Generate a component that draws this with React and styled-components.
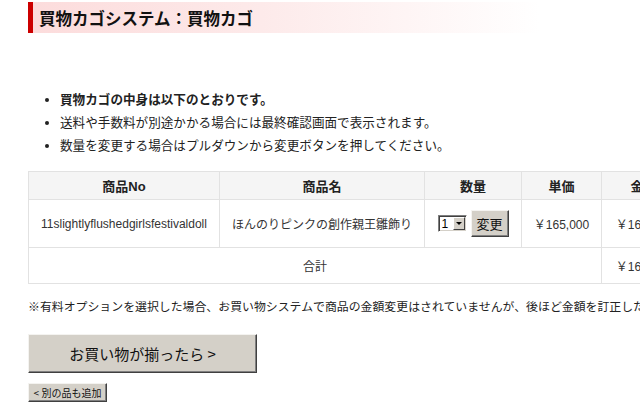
import React from "react";
import styled, { createGlobalStyle } from "styled-components";

const Global = createGlobalStyle`
  html, body { margin: 0; padding: 0; background: #fff; overflow: hidden; }
  body { font-family: "Liberation Sans", "Noto Sans CJK JP", sans-serif; color: #222; }
`;

const Page = styled.div`
  padding: 2px 0 0 28px;
  width: 640px;
  box-sizing: border-box;
`;

const Heading = styled.h1`
  margin: 0;
  height: 31px;
  width: 512px;
  box-sizing: border-box;
  border-left: 5px solid #cc0000;
  background: linear-gradient(to right, #fcdcdc 0%, #fdeaea 45%, #ffffff 100%);
  display: flex;
  align-items: center;
  padding-left: 6px;
  font-size: 16.5px;
  font-weight: bold;
  color: #111;
  font-family: "Noto Sans CJK JP", sans-serif;
`;

const Notes = styled.ul`
  margin: 54px 0 0 0;
  padding: 0 0 0 32px;
  list-style: disc;
  font-size: 12.6px;
  line-height: 23px;
  font-family: "Noto Sans CJK JP", sans-serif;
  li::marker { font-size: 11px; }
`;

const Note = styled.li`
  font-weight: ${(p) => (p.$strong ? "bold" : "normal")};
  color: #222;
`;

const Table = styled.table`
  margin-top: 15px;
  border-collapse: collapse;
  table-layout: fixed;
  width: 657px;
  font-size: 12px;
`;

const Th = styled.th`
  background: #f5f5f5;
  border: 1px solid #e2e2e2;
  height: 27px;
  padding: 0;
  font-size: 13px;
  font-weight: bold;
  color: #222;
  text-align: center;
  font-family: "Liberation Sans", "Noto Sans CJK JP", sans-serif;
`;

const Td = styled.td`
  border: 1px solid #e2e2e2;
  height: ${(p) => p.$h}px;
  padding: 0;
  text-align: center;
  vertical-align: middle;
  color: #333;
  white-space: nowrap;
  overflow: hidden;
`;

const QtyWrap = styled.div`
  display: flex;
  align-items: center;
  justify-content: center;
  gap: 4px;
`;

const FakeSelect = styled.span`
  display: inline-flex;
  align-items: stretch;
  height: 17px;
  width: 29px;
  box-sizing: border-box;
  border-top: 1px solid #808080;
  border-left: 1px solid #808080;
  border-right: 1px solid #fff;
  border-bottom: 1px solid #fff;
  box-shadow: inset 1px 1px 0 #404040, inset -1px -1px 0 #d4d0c8;
  background: #fff;
  font-size: 12px;
  color: #000;
`;

const SelectValue = styled.span`
  flex: 1;
  display: flex;
  align-items: center;
  padding-left: 3px;
  font-family: "Liberation Sans", sans-serif;
`;

const SelectArrow = styled.span`
  width: 12px;
  margin: 1px 1px 1px 0;
  background: #d4d0c8;
  border-top: 1px solid #fff;
  border-left: 1px solid #fff;
  border-right: 1px solid #404040;
  border-bottom: 1px solid #404040;
  box-sizing: border-box;
  display: flex;
  align-items: center;
  justify-content: center;
  &::after {
    content: "";
    border-left: 3px solid transparent;
    border-right: 3px solid transparent;
    border-top: 3px solid #000;
  }
`;

const ClassicButton = styled.button`
  background: #d4d0c8;
  border: none;
  border-top: 1px solid #f4f3f0;
  border-left: 1px solid #f4f3f0;
  border-right: 1px solid #404040;
  border-bottom: 1px solid #404040;
  box-shadow: inset -1px -1px 0 #808080;
  color: #111;
  font-family: "Noto Sans CJK JP", sans-serif;
  padding: 0;
  cursor: pointer;
  width: ${(p) => p.$w}px;
  height: ${(p) => p.$h}px;
  font-size: ${(p) => p.$fs}px;
  display: flex;
  align-items: center;
  justify-content: center;
  white-space: pre;
`;

const Remark = styled.p`
  margin: 13px 0 0 0;
  font-size: 11.9px;
  line-height: 18px;
  white-space: nowrap;
  font-family: "Noto Sans CJK JP", sans-serif;
  color: #222;
`;

const Actions = styled.div`
  display: flex;
  flex-direction: column;
  align-items: flex-start;
  gap: 10px;
  margin-top: 19px;
`;

export default function App() {
  return (
    <>
      <Global />
      <Page>
        <Heading>買物カゴシステム：買物カゴ</Heading>
        <Notes>
          <Note $strong>買物カゴの中身は以下のとおりです。</Note>
          <Note>送料や手数料が別途かかる場合には最終確認画面で表示されます。</Note>
          <Note>数量を変更する場合はプルダウンから変更ボタンを押してください。</Note>
        </Notes>
        <Table>
          <colgroup>
            <col style={{ width: 191 }} />
            <col style={{ width: 205 }} />
            <col style={{ width: 97 }} />
            <col style={{ width: 80 }} />
            <col style={{ width: 84 }} />
          </colgroup>
          <thead>
            <tr>
              <Th>商品No</Th>
              <Th>商品名</Th>
              <Th>数量</Th>
              <Th>単価</Th>
              <Th>金額</Th>
            </tr>
          </thead>
          <tbody>
            <tr>
              <Td $h={47}>11slightlyflushedgirlsfestivaldoll</Td>
              <Td $h={47}>ほんのりピンクの創作親王雛飾り</Td>
              <Td $h={47}>
                <QtyWrap>
                  <FakeSelect>
                    <SelectValue>1</SelectValue>
                    <SelectArrow />
                  </FakeSelect>
                  <ClassicButton $w={38} $h={27} $fs={13}>変更</ClassicButton>
                </QtyWrap>
              </Td>
              <Td $h={47}>￥165,000</Td>
              <Td $h={47}>￥165,000</Td>
            </tr>
            <tr>
              <Td $h={35} colSpan={4}>合計</Td>
              <Td $h={35}>￥165,000</Td>
            </tr>
          </tbody>
        </Table>
        <Remark>※有料オプションを選択した場合、お買い物システムで商品の金額変更はされていませんが、後ほど金額を訂正した上でご連絡いたします。</Remark>
        <Actions>
          <ClassicButton $w={229} $h={39} $fs={15}>{"お買い物が揃ったら >"}</ClassicButton>
          <ClassicButton $w={79} $h={19} $fs={10}>{"< 別の品も追加"}</ClassicButton>
        </Actions>
      </Page>
    </>
  );
}
